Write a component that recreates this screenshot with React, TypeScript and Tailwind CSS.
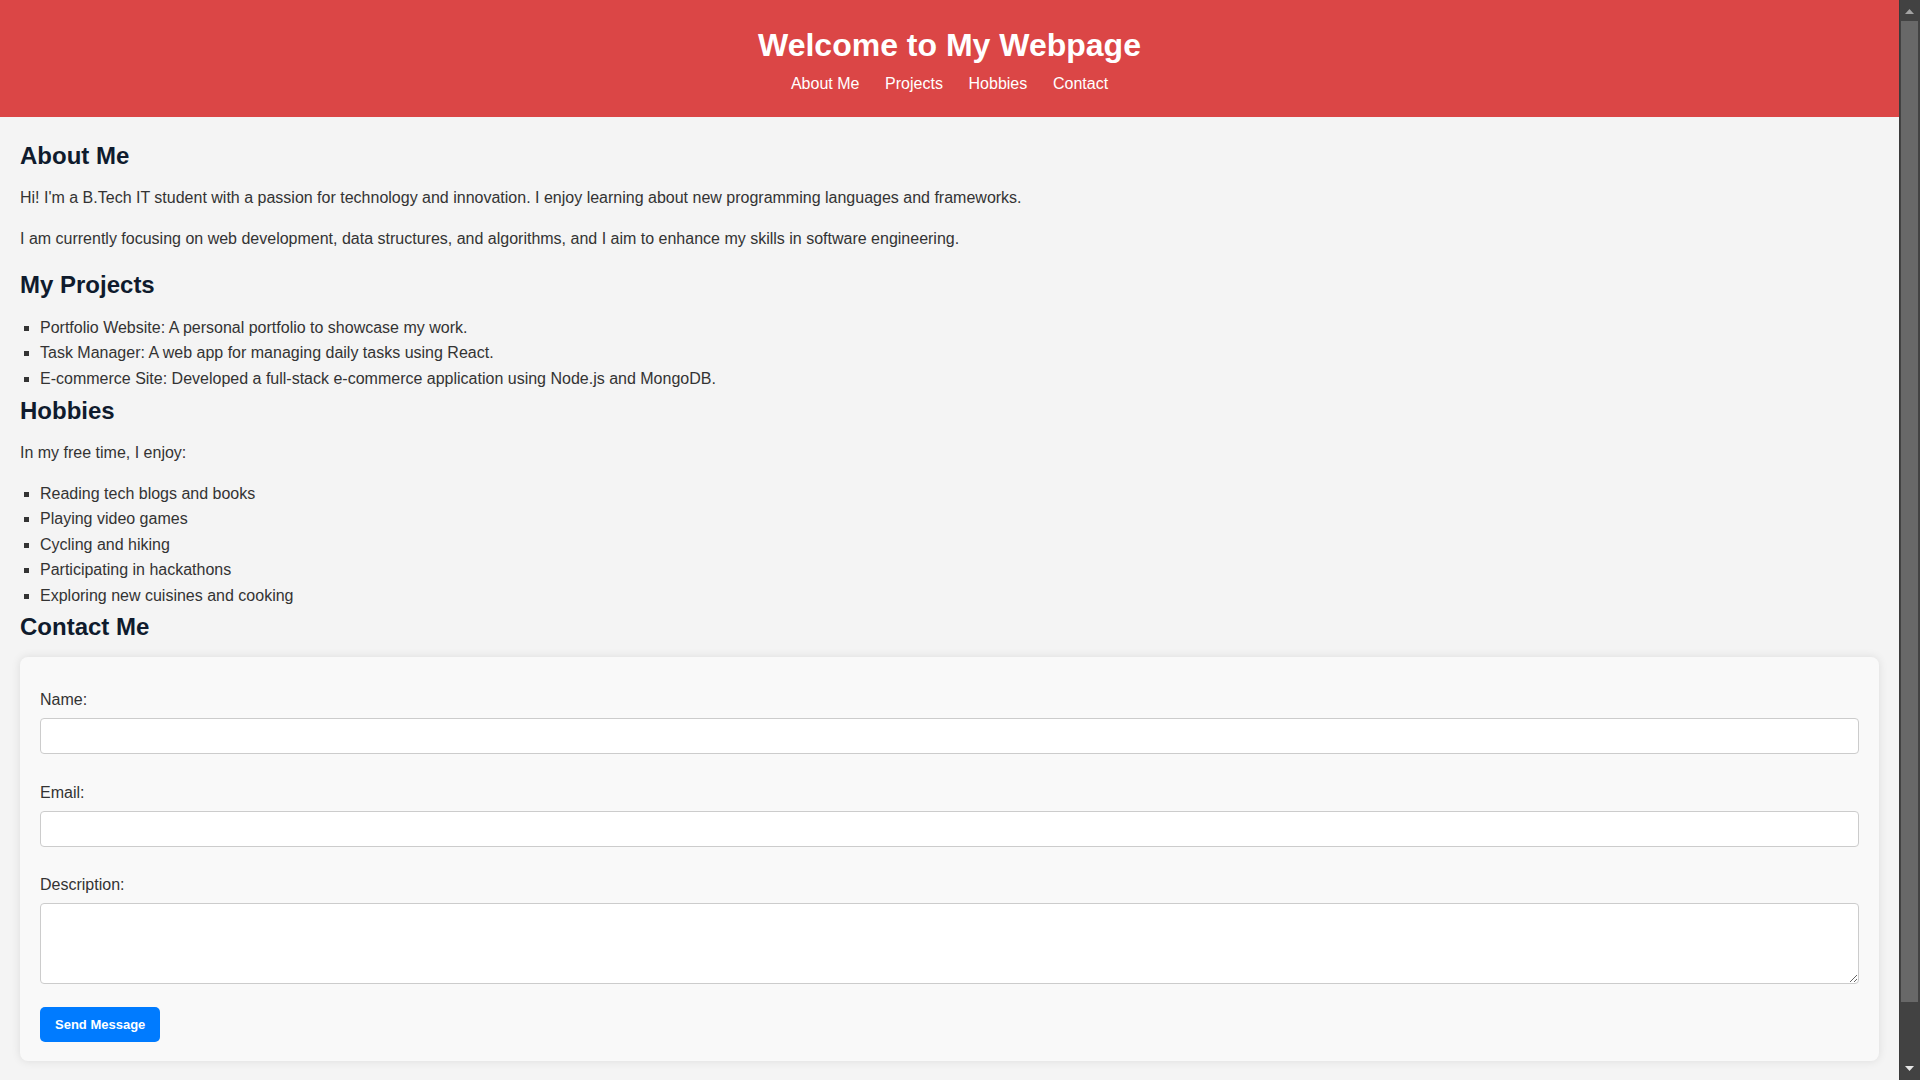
import React from "react";

const heading = "text-[24px] font-bold leading-[38.4px] text-[#0f1b2d]";

function Scrollbar() {
  return (
    <svg width="21" height="1080" viewBox="0 0 21 1080" className="block shrink-0">
      <rect x="0" y="0" width="21" height="1080" fill="#424242" />
      <rect x="0" y="0" width="1" height="1080" fill="#3a3a3a" />
      <polygon points="6,14 10.5,9 15,14" fill="#a3a3a3" />
      <rect x="2" y="21" width="17" height="981" fill="#686868" />
      <polygon points="6,1066 15,1066 10.5,1071" fill="#e6e6e6" />
    </svg>
  );
}

export default function App() {
  return (
    <div className="flex h-screen overflow-hidden bg-[#f4f4f4] font-['Liberation_Sans',Arial,Helvetica,sans-serif] text-[16px] leading-[1.6] text-[#333]">
      <div className="min-w-0 flex-1 overflow-y-auto">
        <header className="bg-[#db4646] pt-[20px] pb-[20px] text-center text-white">
          <h1 className="text-[32px] font-bold leading-[51.2px]">Welcome to My Webpage</h1>
          <nav className="flex justify-center gap-[25.7px] leading-[25.6px]">
            <a href="#about" className="text-white no-underline">About Me</a>
            <a href="#projects" className="text-white no-underline">Projects</a>
            <a href="#hobbies" className="text-white no-underline">Hobbies</a>
            <a href="#contact" className="text-white no-underline">Contact</a>
          </nav>
        </header>

        <main className="px-[20px] pt-[20px] pb-[82px]">
          <section id="about">
            <h2 className={`${heading} mb-[10px]`}>About Me</h2>
            <p className="mb-[15px]">
              Hi! I'm a B.Tech IT student with a passion for technology and innovation. I enjoy learning about new programming languages and frameworks.
            </p>
            <p>
              I am currently focusing on web development, data structures, and algorithms, and I aim to enhance my skills in software engineering.
            </p>
          </section>

          <section id="projects">
            <h2 className={`${heading} mt-[15px] mb-[10px]`}>My Projects</h2>
            <ul className="list-[square] pl-[20px]">
              <li>Portfolio Website: A personal portfolio to showcase my work.</li>
              <li>Task Manager: A web app for managing daily tasks using React.</li>
              <li>E-commerce Site: Developed a full-stack e-commerce application using Node.js and MongoDB.</li>
            </ul>
          </section>

          <section id="hobbies">
            <h2 className={`${heading} mb-[10px]`}>Hobbies</h2>
            <p className="mb-[15px]">In my free time, I enjoy:</p>
            <ul className="list-[square] pl-[20px]">
              <li>Reading tech blogs and books</li>
              <li>Playing video games</li>
              <li>Cycling and hiking</li>
              <li>Participating in hackathons</li>
              <li>Exploring new cuisines and cooking</li>
            </ul>
          </section>

          <section id="contact">
            <h2 className={`${heading} -mt-[1px] mb-[11px]`}>Contact Me</h2>
            <form
              className="rounded-[8px] bg-[#f9f9f9] px-[20px] pt-[20px] pb-[19px] shadow-[0_0_10px_rgba(0,0,0,0.1)]"
              onSubmit={(e) => e.preventDefault()}
            >
              <label htmlFor="name" className="mt-[10px] block leading-[25.6px]">Name:</label>
              <input
                id="name"
                type="text"
                className="mt-[5px] block h-[36px] w-full rounded-[4px] border border-[#ccc] bg-white px-[10px] outline-none"
              />
              <label htmlFor="email" className="mt-[26px] block leading-[25.6px]">Email:</label>
              <input
                id="email"
                type="email"
                className="mt-[5.5px] block h-[36px] w-full rounded-[4px] border border-[#ccc] bg-white px-[10px] outline-none"
              />
              <label htmlFor="desc" className="mt-[25.5px] block leading-[25.6px]">Description:</label>
              <textarea
                id="desc"
                className="mt-[5.5px] block h-[81px] w-full rounded-[4px] border border-[#ccc] bg-white p-[10px] outline-none"
              />
              <button
                type="submit"
                className="mt-[23px] block h-[35px] rounded-[5px] bg-[#007bff] px-[15px] text-[13px] font-bold leading-[15px] text-white"
              >
                Send Message
              </button>
            </form>
          </section>
        </main>
      </div>
      <Scrollbar />
    </div>
  );
}
